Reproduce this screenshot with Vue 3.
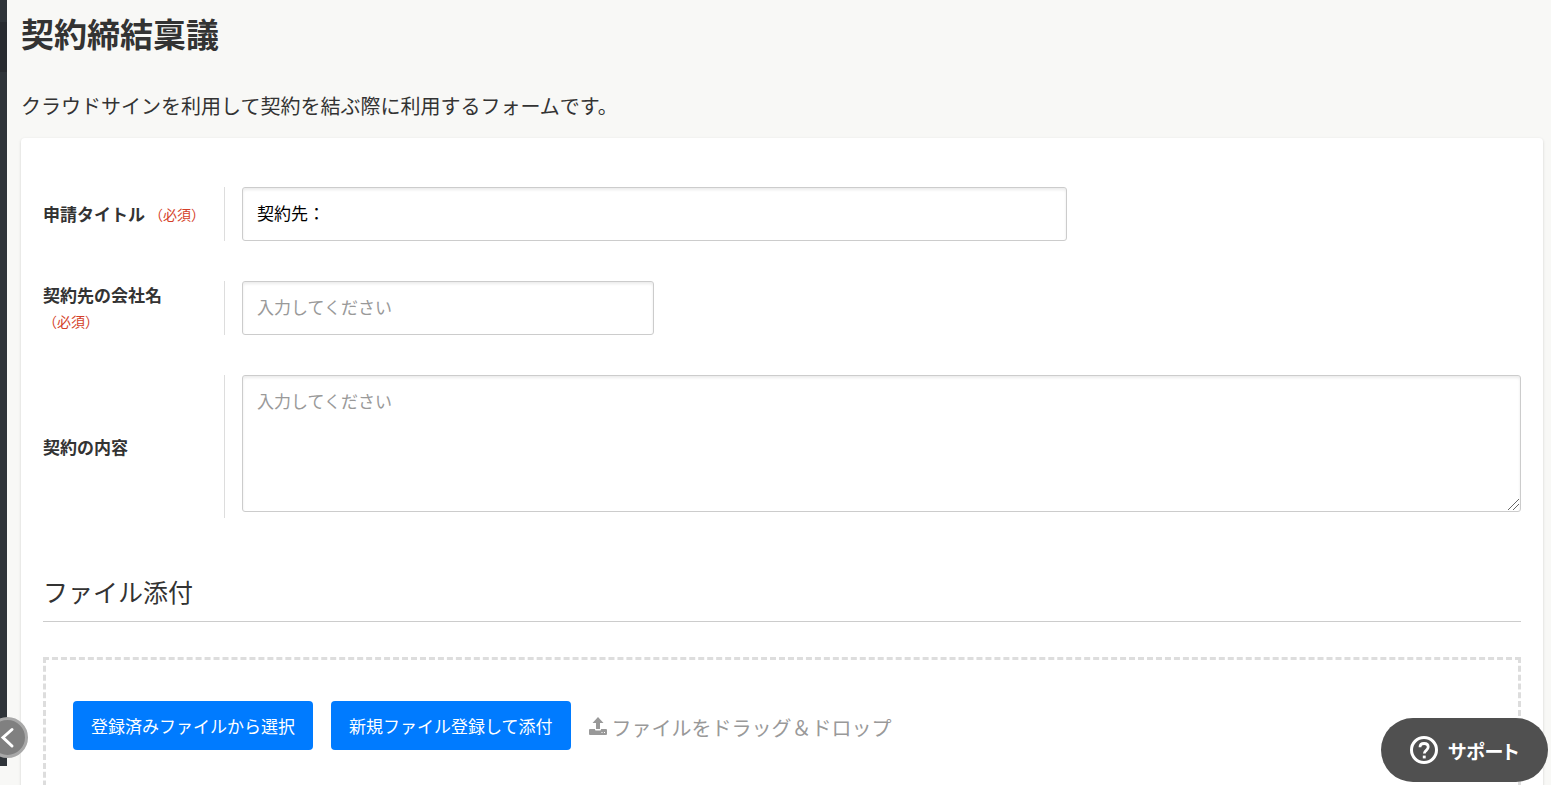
<script setup>
import { ref } from 'vue'

const title = ref('契約先：')
const company = ref('')
const content = ref('')
</script>

<template>
  <div class="page">
    <aside class="sidebar"><div class="sidebar-item"></div></aside>
    <button class="collapse" type="button" aria-label="メニューを開閉">
      <svg viewBox="0 0 40 40" width="40" height="40" aria-hidden="true">
        <path d="M24 11.500 15 19.500 24 28" fill="none" stroke="#fff" stroke-width="3" stroke-linecap="round" />
      </svg>
    </button>

    <main class="main">
      <h1>契約締結稟議</h1>
      <p class="lead">クラウドサインを利用して契約を結ぶ際に利用するフォームです。</p>

      <form class="card" @submit.prevent>
        <div class="row">
          <label class="label" for="title">申請タイトル <span class="required">（必須）</span></label>
          <div class="field"><input id="title" v-model="title" class="wide" type="text" /></div>
        </div>
        <div class="row">
          <label class="label" for="company">契約先の会社名 <span class="required">（必須）</span></label>
          <div class="field"><input id="company" v-model="company" class="medium" type="text" placeholder="入力してください" /></div>
        </div>
        <div class="row">
          <label class="label" for="content">契約の内容</label>
          <div class="field area"><textarea id="content" v-model="content" placeholder="入力してください"></textarea></div>
        </div>

        <h2>ファイル添付</h2>
        <div class="dropzone">
          <button class="primary" type="button">登録済みファイルから選択</button>
          <button class="primary" type="button">新規ファイル登録して添付</button>
          <div class="hint">
            <svg viewBox="0 0 18 18" width="18" height="18" aria-hidden="true">
              <path fill="#999" fill-rule="evenodd" d="M9 0 14.500 6H11v6H7V6H3.500ZM1 12h5c0 1 .4 1.500 1.300 1.500h3.400c.9 0 1.300-.5 1.300-1.500h5a1 1 0 0 1 1 1v4a1 1 0 0 1-1 1H1a1 1 0 0 1-1-1v-4a1 1 0 0 1 1-1Zm11.500 3v1h1v-1Zm2.500 0v1h1v-1Z" />
            </svg>
            <span>ファイルをドラッグ＆ドロップ</span>
          </div>
        </div>
      </form>
    </main>

    <button class="support" type="button">
      <svg viewBox="0 0 28 28" width="28" height="28" fill="none" stroke="#fff" aria-hidden="true">
        <circle cx="14" cy="14" r="12.500" stroke-width="3" />
        <path d="M10 11.300C10 8.900 11.700 7.500 14.100 7.500s4.100 1.400 4.100 3.600c0 3.200-3.900 3.200-3.900 6.400" stroke-width="2.800" />
        <path d="M12.800 21h2.900" stroke-width="2.800" />
      </svg>
      <span>サポート</span>
    </button>
  </div>
</template>

<style>
body {
  margin: 0;
  background: #f8f8f6;
}
</style>

<style scoped>
.page {
  display: flex;
  gap: 14px;
  height: 100vh;
  overflow: hidden auto;
  scrollbar-width: none;
  background: #f8f8f6;
  color: #333;
  font-family: "Noto Sans CJK JP", sans-serif;
  font-size: 17px;
}
.page * {
  box-sizing: border-box;
}
button,
input,
textarea {
  font: inherit;
}
.sidebar {
  position: sticky;
  top: 0;
  flex: none;
  width: 7px;
  height: calc(100vh - 19px);
  padding-top: 22px;
  background: #2f3439;
}
.sidebar-item {
  height: 50px;
  background: #282b30;
}
.collapse {
  position: fixed;
  left: -13px;
  bottom: 27px;
  width: 41px;
  height: 41px;
  display: flex;
  align-items: center;
  justify-content: center;
  padding: 0;
  border: 3px solid #a8a8a8;
  border-radius: 50%;
  background: #808080;
  cursor: pointer;
}
.collapse svg {
  flex: none;
}
.main {
  flex: 1;
  min-width: 0;
  padding-right: 8px;
}
h1 {
  margin: 8px 0 0;
  font-size: 33px;
  line-height: 50px;
  font-weight: 700;
}
.lead {
  margin: 33px 0 17px;
  font-size: 20px;
  line-height: 30px;
}
.card {
  padding: 49px 22px 40px;
  border-radius: 4px;
  background: #fff;
  box-shadow: 0 1px 3px rgba(0, 0, 0, 0.16);
}
.row {
  display: flex;
  margin-bottom: 40px;
}
.label {
  display: flex;
  flex: none;
  flex-wrap: wrap;
  align-content: center;
  align-items: center;
  column-gap: 4px;
  width: 182px;
  padding-right: 16px;
  border-right: 1px solid #ddd;
  font-weight: 700;
  line-height: 26px;
}
.required {
  color: #d43f2a;
  font-size: 14px;
  font-weight: 400;
}
.field {
  display: flex;
  flex: 1;
  min-width: 0;
  padding-left: 17px;
}
.area {
  padding-bottom: 6px;
}
input,
textarea {
  max-width: 100%;
  margin: 0;
  border: 1px solid #ccc;
  border-radius: 3px;
  background: #fff;
  box-shadow: inset 0 2px 3px rgba(0, 0, 0, 0.08);
  color: #000;
}
input {
  height: 54px;
  padding: 0 14px 4px;
}
.wide {
  width: 825px;
}
.medium {
  width: 412px;
}
textarea {
  width: 100%;
  height: 137px;
  padding: 13px 14px;
  line-height: 24px;
  resize: both;
}
textarea::-webkit-resizer {
  background: linear-gradient(135deg, transparent 47%, #666 47% 52%, transparent 52% 70%, #666 70% 75%, transparent 75%) 3px 3px / 11px 11px no-repeat;
}
::placeholder {
  color: #999;
  opacity: 1;
}
h2 {
  margin: 52px 0 35px;
  padding-bottom: 9px;
  border-bottom: 1px solid #ccc;
  font-size: 25px;
  line-height: 42px;
  font-weight: 400;
}
.dropzone {
  display: flex;
  flex-wrap: wrap;
  align-items: center;
  gap: 18px;
  padding: 41px 27px 60px;
  border: 3px dashed #ddd;
}
.primary {
  height: 49px;
  padding: 0 18px;
  border: 0;
  border-radius: 4px;
  background: #007bff;
  color: #fff;
  cursor: pointer;
}
.hint {
  display: flex;
  align-items: center;
  gap: 5px;
  color: #999;
  font-size: 20px;
  line-height: 30px;
}
.hint span {
  padding-top: 4px;
}
.support {
  position: fixed;
  right: 3px;
  bottom: 3px;
  display: flex;
  align-items: center;
  gap: 10px;
  height: 64px;
  padding: 0 29px;
  border: 0;
  border-radius: 32px;
  background: #505050;
  color: #fff;
  font-size: 19px;
  font-weight: 700;
  font-feature-settings: "palt";
  cursor: pointer;
}
</style>
